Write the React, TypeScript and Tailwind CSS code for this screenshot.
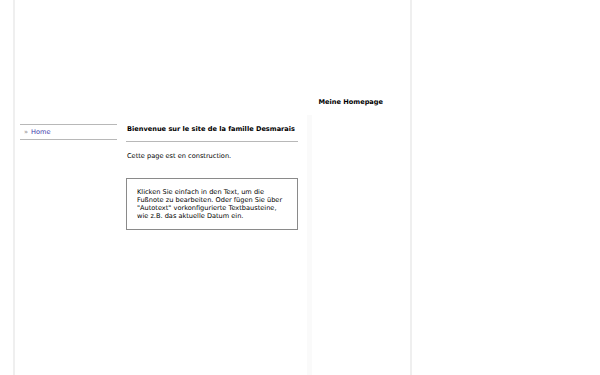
export default function App() {
  return (
    <div className="w-[600px] h-[375px] bg-white overflow-hidden text-black" style={{ fontFamily: '"DejaVu Sans", Verdana, sans-serif' }}>
      <div className="ml-[13px] w-[399px] h-[375px] border-l-2 border-r-2 border-[#efefef] flex flex-col">
        <div className="h-[115px] flex items-end justify-end pr-[27px] pb-[9px]">
          <span className="text-[6.6px] font-bold leading-[8px] whitespace-nowrap">Meine Homepage</span>
        </div>
        <div className="flex flex-1">
          <div className="w-[97px] ml-[5px] mt-[9px]">
            <div className="border-t border-b border-[#b8b8b8] h-[16px] flex items-center pl-[4px] pt-[1px] text-[6.6px]">
              <span className="text-[#888] mr-[3px]">»</span>
              <span className="text-[#3b3baa]">Home</span>
            </div>
          </div>
          <div className="w-[172px] ml-[9px] mt-[10px]">
            <div className="text-[6.6px] font-bold leading-[8px] pl-[1px] pb-[8px] border-b border-[#b8b8b8] whitespace-nowrap">
              Bienvenue sur le site de la famille Desmarais
            </div>
            <div className="text-[6.6px] leading-[8px] pl-[1px] mt-[10px]">Cette page est en construction.</div>
            <div className="mt-[18px] border border-[#8a8a8a] pl-[10px] pr-[11px] pt-[9px] pb-[9px] text-[6.6px] leading-[8px]">
              Klicken Sie einfach in den Text, um die Fußnote zu bearbeiten. Oder fügen Sie über "Autotext" vorkonfigurierte Textbausteine, wie z.B. das aktuelle Datum ein.
            </div>
          </div>
          <div className="ml-[9px] flex-1 border-l-[5px] border-[#fafafa]" />
        </div>
      </div>
    </div>
  );
}
